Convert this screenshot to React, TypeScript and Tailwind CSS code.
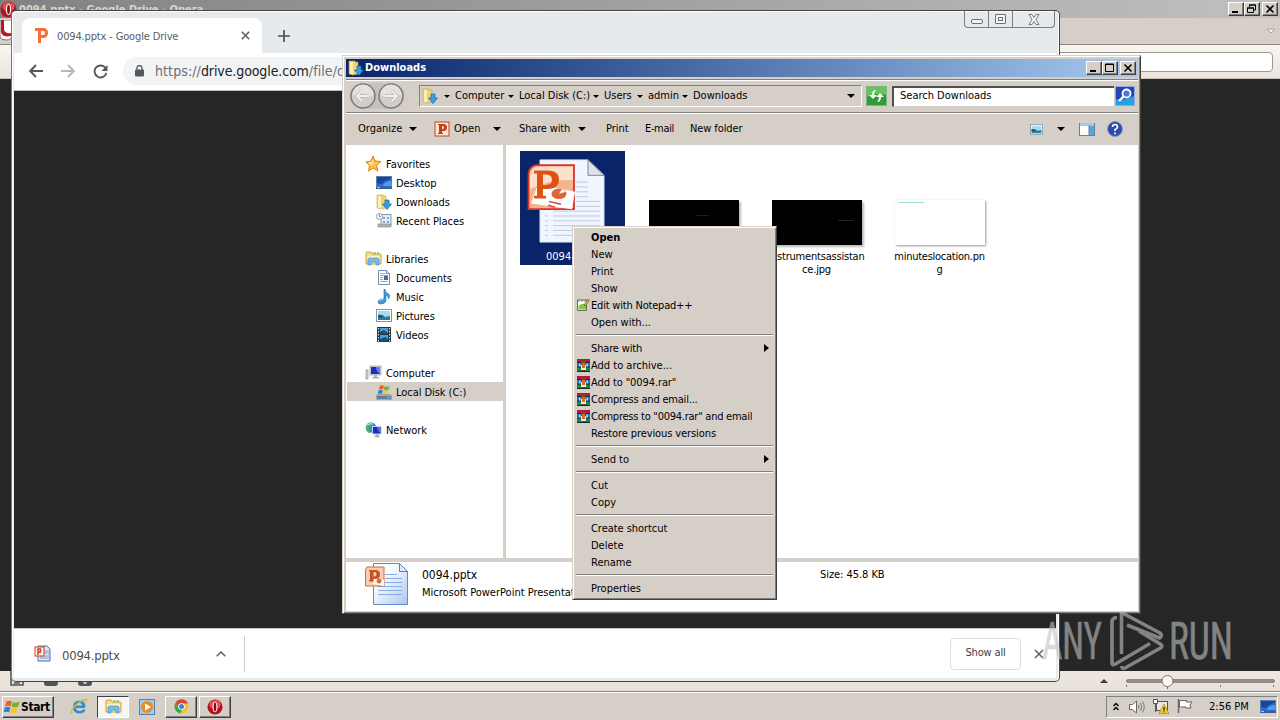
import React from 'react';

const Down = ({ className = '' }: { className?: string }) => (
  <svg width="8" height="4" viewBox="0 0 8 4" className={`shrink-0 ${className}`}>
    <path d="M0 0h8L4 4z" fill="#000" />
  </svg>
);

const PowerPointDoc = () => (
  <svg width="84" height="87" viewBox="0 0 84 90" preserveAspectRatio="none" className="shrink-0">
    <path d="M15 3h48l16 16v69H15z" fill="#f1f5fd" stroke="#dbe4f4" />
    <path d="M63 3v16h16z" fill="#dde3ea" stroke="#7d8694" />
    <path d="M51 26h12M51 31h12M51 36h12M51 41h12M51 46h24M51 51h24M28 56h47M28 61h47M28 66h47M28 71h47M28 76h47M28 81h47M20 61h3M20 66h3M20 71h3M20 76h3M20 81h3" stroke="#bccae4" />
    <path d="M11 8.500h38V54H3.500V17q1-7 7.500-8.500z" fill="#f5b58c" stroke="#d9342b" strokeWidth="1.800" />
    <path d="M5 33Q28 22 48 24V10H12Q6 12 5 19z" fill="#fbe0cb" />
    <path d="M13 28l37 8-3 18-41-6z" fill="#fff" />
    <ellipse cx="34" cy="38" rx="7.500" ry="5.500" fill="#df6437" />
    <path d="M34 38l3-5 4 3z" fill="#fff" />
    <path d="M24 46l12 3M23 50l7 2" stroke="#d94c3d" strokeWidth="1.600" />
    <path d="M9 14h13q12 0 12 9.500T22 33h-4v7h3v3H9v-3h3V17H9zM18 18v11h3q6-.5 6-5.500t-6-5.500z" fill="#dc5217" fillRule="evenodd" />
  </svg>
);

const PowerPointDocSmall = () => (
  <svg width="44" height="45" viewBox="0 0 44 45" className="shrink-0">
    <defs>
      <linearGradient id="page" x1="0" y1="0" x2="1" y2="1">
        <stop offset=".3" stopColor="#fbfdff" />
        <stop offset="1" stopColor="#a9c8f2" />
      </linearGradient>
    </defs>
    <path d="M8.500 1.500h26l8 8v33h-34z" fill="url(#page)" stroke="#6389c7" />
    <path d="M34.500 1.500v8h8z" fill="#e2edfb" stroke="#5c7fb8" />
    <path d="M20 12.500h12M20 16.500h17M20 20.500h17M13 24.500h24M13 28.500h24M13 32.500h24" stroke="#8caee0" />
    <path d="M2 5h17v19H.500V8z" fill="#f8cdb2" stroke="#d86a45" />
    <path d="M9 16l10 2v6l-11-2z" fill="#fff" />
    <circle cx="14" cy="19" r="2.500" fill="#e0693d" />
    <path d="M4 8h6q5 0 5 4.500T10 17H8.500v2.500H4V18h1V9.500H4zM8.500 10v4.500H10q1.500-.2 1.500-2.200T10 10z" fill="#c9501f" fillRule="evenodd" />
  </svg>
);

const PptSmall = () => (
  <svg width="16" height="16" viewBox="0 0 16 16" className="shrink-0">
    <rect x="1" y="1" width="14" height="14" fill="#fbe3d5" stroke="#c8421f" />
    <path d="M4 3h5q4 0 4 3.500T9 10H8v2h1v1H4v-1h1V4H4zM8 5v3h1q1-.3 1-1.500T9 5z" fill="#c63c13" fillRule="evenodd" />
  </svg>
);

const PptFile = () => (
  <svg width="17" height="17" viewBox="0 0 17 17" className="shrink-0">
    <path d="M4 1h9l3 3v12H4z" fill="#d9e6fa" stroke="#4a6fb4" />
    <path d="M10 6h5M10 8h5M6 11h9M6 13h9" stroke="#7f9fd5" />
    <rect x="1" y="2" width="9" height="9" fill="#fff0e8" stroke="#c8421f" />
    <path d="M4 10V4h2.500v3H4" fill="none" stroke="#c8421f" strokeWidth="1.500" />
  </svg>
);

const FolderDown = () => (
  <svg width="16" height="16" viewBox="0 0 16 16" className="shrink-0">
    <path d="M1 1h6v1h3v12l-5 1-4-1z" fill="#f1d370" stroke="#c9a340" strokeWidth=".6" />
    <path d="M2 2h3v12.500l-3-.8z" fill="#fbeeb0" />
    <path d="M9 6h4v4h2.500L11 15.500 6.500 10H9z" fill="#3c9ee0" stroke="#1666a8" strokeWidth=".7" />
  </svg>
);

const Star = () => (
  <svg width="17" height="17" viewBox="0 0 17 17" className="shrink-0">
    <path d="M8 1l2 5 6 .6-4.500 4 1.500 5.400L8.200 13 3.500 16l1-5.500L.8 7l5-.8z" fill="#ffc247" stroke="#de7f14" />
    <path d="M8 3l-1.300 4-4 .6 3 2.600L8 9z" fill="#ffe599" />
  </svg>
);

const Desktop = () => (
  <svg width="16" height="13" viewBox="0 0 16 13" className="shrink-0">
    <rect x=".5" y=".5" width="15" height="11" fill="#2f6bc4" stroke="#5b7fb4" />
    <path d="M1 1h14v2Q8 4 6 8L1 7z" fill="#1a4699" />
    <path d="M7 9q3-4 8-4v5H7z" fill="#4f9de6" />
    <path d="M0 11h16v2H0z" fill="#345e9c" />
    <path d="M1 11h3v1H1z" fill="#8fd1f5" />
  </svg>
);

const Recent = () => (
  <svg width="16" height="16" viewBox="0 0 16 16" className="shrink-0">
    <path d="M5 1.500h10V12H5z" fill="#e7eef5" stroke="#8498ad" />
    <path d="M7 4h2v2H7zM11 4h2v2h-2zM7 8h2v2H7zM11 8h2v2h-2z" fill="#7ea6cc" />
    <path d="M2 11h13v3H2z" fill="#a7b2bd" stroke="#7e8994" strokeWidth=".6" />
    <circle cx="3.500" cy="3.500" r="3" fill="#fff" stroke="#8c98a6" />
    <path d="M3.500 1.500v2H5" stroke="#556" fill="none" strokeWidth=".7" />
  </svg>
);

const Libraries = () => (
  <svg width="17" height="15" viewBox="0 0 17 15" className="shrink-0">
    <path d="M1 2q0-1 1-1h4l1 2h8q1 0 1 1v9H1z" fill="#f6df85" stroke="#c9a63f" />
    <path d="M2 5h13v3H2z" fill="#fff1b6" />
    <path d="M3 13V9q0-2 2-2h7q2 0 2 2v5h-3v-3H6v3H3z" fill="#74bdec" stroke="#3e8cc4" strokeWidth=".6" />
    <path d="M8 2h3M12 2h2" stroke="#55aa55" />
  </svg>
);

const Doc = () => (
  <svg width="16" height="16" viewBox="0 0 16 16" className="shrink-0">
    <path d="M2.500 .5h8l3 3v11h-11z" fill="#fff" stroke="#6f8fae" />
    <path d="M10.500.5v3h3" fill="#d9e5f1" stroke="#6f8fae" />
    <path d="M4 3.500h5M4 5.500h8M4 7.500h3M4 9.500h3M4 11.500h8" stroke="#8fb0d6" />
    <path d="M8 6h4v4H8z" fill="#44699f" />
  </svg>
);

const Music = () => (
  <svg width="16" height="16" viewBox="0 0 16 16" className="shrink-0">
    <path d="M9 0q0 3 3 4.500T12.500 10q.3-3-2.500-4v6q-1 3-5 3Q1.500 15 2 12.500 3 9.500 8 10V0z" fill="#3d9bd8" stroke="#1d70ad" strokeWidth=".6" />
    <path d="M4 11.500q1-1 3-.8" stroke="#b5e2fa" fill="none" />
  </svg>
);

const Picture = ({ className = '' }: { className?: string }) => (
  <svg width="16" height="13" viewBox="0 0 16 13" className={`shrink-0 ${className}`}>
    <rect x=".5" y=".5" width="15" height="12" fill="#fff" stroke="#8294a5" />
    <path d="M2 2h12v9H2z" fill="#a5dcf2" />
    <path d="M2 6q5-1 7 2l5-1v4H2z" fill="#2c7ba3" />
    <path d="M2 6q3-1 6 2l-6 1z" fill="#235a6f" />
  </svg>
);

const Video = () => (
  <svg width="15" height="15" viewBox="0 0 15 15" className="shrink-0">
    <path d="M0 0h14v15H0z" fill="#273845" />
    <path d="M3 1h8v6H3zM3 8h8v6H3z" fill="#4aa3d8" />
    <path d="M3 5l4-2 4 3v1H3zM3 12l5-2 3 2v2H3z" fill="#194f7b" />
    <path d="M1.500 1v14M12.500 1v14" stroke="#e5edf3" strokeDasharray="1.500 1.500" />
  </svg>
);

const Computer = () => (
  <svg width="17" height="15" viewBox="0 0 17 15" className="shrink-0">
    <path d="M1 5h2v9H1z" fill="#d5d7d8" stroke="#8d9194" strokeWidth=".7" />
    <rect x="5" y="1" width="11" height="9" fill="#d6dce6" stroke="#9299a8" strokeWidth=".7" />
    <path d="M6 2h9v7H6z" fill="#1f2fbb" />
    <path d="M11 2h4v7q-4-2-4-7z" fill="#5c7cf0" />
    <path d="M9 10h3v2h2v1.500H7.500V12H9z" fill="#aab1ba" />
  </svg>
);

const WinFlag = ({ size }: { size: number }) => (
  <svg width={size} height={size} viewBox="0 0 16 16" className="shrink-0">
    <path d="M2.500 2.500Q5 .8 8 2.500L6.700 7.300Q4 6 1 7.500z" fill="#ee6125" />
    <path d="M8.900 3Q12 4.500 15.500 2.500L14 7.500q-3 1.600-6.400.2z" fill="#71b42c" />
    <path d="M.8 8.500Q4 7 6.400 8.400L5 13.400Q2.500 12-.5 13.600z" fill="#2b80d9" />
    <path d="M7.300 8.800Q10.500 10 13.700 8.600l-1.400 5Q9 15 5.900 13.700z" fill="#fdc52b" />
  </svg>
);

const Disk = () => (
  <span className="flex w-4 flex-col items-center">
    <WinFlag size={12} />
    <svg width="16" height="6" viewBox="0 0 16 6" className="-mt-[2px]">
      <path d="M0 1l2-1h12l2 1v5H0z" fill="#a3a9ad" />
      <path d="M1 2h14v3H1z" fill="#5f7f9a" />
      <path d="M11 3h3v1h-3z" fill="#56e35c" />
    </svg>
  </span>
);

const Network = () => (
  <svg width="17" height="16" viewBox="0 0 17 16" className="shrink-0">
    <circle cx="6" cy="5.500" r="5.200" fill="#2d8fd8" />
    <path d="M2 3q3-3 5-2L6 4 3 6l2 3-1 2Q0 8 1 5z" fill="#50b848" />
    <path d="M2 3q3-2 6-1" stroke="#c9f0fa" fill="none" />
    <rect x="7" y="4" width="9.500" height="8.500" fill="#c9d2e2" />
    <path d="M8 5h7.500v6.500H8z" fill="#1c2cba" />
    <path d="M12 5h3.500v6Q12 9 12 5z" fill="#5070ea" />
    <path d="M10.500 12.500h3V14h-3zM9.500 14h5v1.200h-5z" fill="#9aa5b5" />
  </svg>
);

const WinRar = () => (
  <svg width="13" height="13" viewBox="0 0 13 13" className="mb-px shrink-0">
    <path d="M0 0h13v4H0z" fill="#b3163f" />
    <path d="M0 4h13v4H0z" fill="#2c6fc0" />
    <path d="M0 8h13v5H0z" fill="#148a3d" />
    <path d="M0 3.500h13M0 8h13M0 12.500h13" stroke="#182a28" />
    <path d="M4 1h5v11H4z" fill="#7f4023" />
    <path d="M4 6h5v5H4z" fill="#efe8e0" />
    <path d="M5 4h3v5H5z" fill="#d86a31" />
    <path d="M2 4.500h1.500v3H2zM9.500 4.500H11v3H9.500z" fill="#b9d3ea" />
  </svg>
);

const Notepad = () => (
  <svg width="14" height="14" viewBox="0 0 14 14" className="mb-px shrink-0">
    <path d="M1.500 2h9v10.500h-9z" fill="#fff" stroke="#5f6f5b" />
    <path d="M2.500 8Q5 5 10 6v5.500H2.500z" fill="#83c83d" />
    <path d="M3 1v3M6 1v3M9 1v3" stroke="#88928a" />
    <path d="M8 7l4-6 1.500 1-4 6z" fill="#eab43c" stroke="#63491a" strokeWidth=".6" />
  </svg>
);

const OperaO = ({ size }: { size: number }) => (
  <svg width={size} height={size} viewBox="0 0 18 18" className="shrink-0">
    <circle cx="9" cy="9" r="8.500" fill="#b70f1c" />
    <ellipse cx="9" cy="6" rx="6.500" ry="5" fill="#e3504f" />
    <ellipse cx="9" cy="9" rx="2.800" ry="6" fill="#fff" />
    <ellipse cx="9" cy="9" rx="1.500" ry="5" fill="#8d0c15" />
  </svg>
);

const raised = 'border border-t-white border-l-white border-r-[#404040] border-b-[#404040] bg-[#d6cfc8] shadow-[inset_-1px_-1px_0_#808080]';

const CaptionButtons = ({ restore = false }: { restore?: boolean }) => (
  <div className="flex">
    <span className={`h-[14px] w-4 ${raised}`}>
      <svg width="14" height="12" viewBox="0 0 14 12"><path d="M3 8h6v2H3z" /></svg>
    </span>
    <span className={`mr-[2px] h-[14px] w-4 ${raised}`}>
      <svg width="14" height="12" viewBox="0 0 14 12">
        {restore ? (
          <path d="M4.500 4V2h6v5h-2M2.500 5h6v4.500h-6zM4 2h7M2 5h7" fill="none" stroke="#000" />
        ) : (
          <path d="M2.500 2h8v7.500h-8zM2 2.500h9" fill="none" stroke="#000" />
        )}
      </svg>
    </span>
    <span className={`h-[14px] w-4 ${raised}`}>
      <svg width="14" height="12" viewBox="0 0 14 12"><path d="M3.500 2.500l7 7M10.500 2.500l-7 7" stroke="#000" strokeWidth="1.600" /></svg>
    </span>
  </div>
);

const OperaWindow = () => (
  <div className="absolute inset-x-0 top-0 flex h-[692px] flex-col bg-[#262626]">
    <div className="flex h-[18px] shrink-0 items-start justify-between bg-linear-to-r from-[#828282] to-[#c0c0c0] pt-px pr-[2px]">
      <div className="flex items-center">
        <OperaO size={17} />
        <span className="ml-[2px] text-[11px] leading-[16px] font-bold text-[#d8d4ce]">0094.pptx - Google Drive - Opera</span>
      </div>
      <div className="pt-px"><CaptionButtons restore /></div>
    </div>
    <div className="flex h-[27px] shrink-0 items-center justify-between border-b border-[#8d8780] bg-[#d6cfc8] pr-1">
      <svg width="12" height="22" viewBox="0 0 12 22"><path d="M0 0h12v15q0 5-6 5-5 0-6-3z" fill="#fff" stroke="#777" /><path d="M1 0h3v10q2 4 7 3v3Q1 18 1 11z" fill="#bd1620" /></svg>
      <svg width="10" height="6" viewBox="0 0 10 6"><path d="M1 1h8L5 5z" fill="#f4f1ed" stroke="#a8a29b" /></svg>
    </div>
    <div className="flex h-[34px] shrink-0 items-center justify-end border-b border-[#c9c3bb] bg-linear-to-b from-[#f8f5f1] to-[#e9e4dc] pr-[7px]">
      <div className="h-[20px] w-[250px] rounded border border-[#9d9892] bg-white" />
    </div>
    <div className="grow" />
    <div className="flex h-[21px] shrink-0 items-center justify-end gap-[18px] border-b border-[#8b857d] bg-linear-to-b from-[#ede7e0] to-[#e8e2da] pr-[5px]">
      <div className="mr-auto flex h-full items-start pl-[10px]">
        <svg width="90" height="15" viewBox="0 0 90 15"><path d="M1 0v14h12V7M4 12h6" fill="none" stroke="#555" strokeWidth="1.600" /><rect x="34" y="6" width="14" height="9" rx="3" fill="#555" /><rect x="68" y="6" width="14" height="9" rx="3" fill="#555" /><circle cx="75" cy="11" r="2" fill="#ccc" /></svg>
      </div>
      <svg width="8" height="4" viewBox="0 0 8 4"><path d="M0 4h8L4 0z" fill="#3c3c3c" /></svg>
      <svg width="149" height="18" viewBox="0 0 149 18">
        <rect x=".5" y="7.500" width="148" height="3" rx="1.500" fill="#958d86" stroke="#77716a" strokeWidth=".7" />
        <path d="M.5 13v2M41.500 14v3M94.500 13v2M147.500 13v2" stroke="#77716a" />
        <circle cx="41.500" cy="9" r="5.500" fill="#fbfaf8" stroke="#77716a" />
      </svg>
    </div>
  </div>
);

const ChromeWindow = () => (
  <div className="absolute top-[10px] left-[11px] flex h-[672px] w-[1049px] flex-col rounded-[5px] border border-[#454545] border-l-[#777] bg-[#e7eaed] pr-[3px] pb-[3px] pl-[2px] text-[#3c4043] shadow-[inset_1px_1px_0_#fff,inset_-1px_0_0_#fff]">
    <div className="flex h-[42px] shrink-0 justify-between">
      <div className="flex items-end pl-2">
        <div className="flex h-[35px] w-[240px] items-center rounded-t-[8px] bg-white px-[12px]">
          <svg width="15" height="17" viewBox="0 0 15 17">
            <path d="M1 1h8q5 0 5 5t-5 5H7v5H4V4H1zM7 4v4h2q2 0 2-2T9 4z" fill="#f4703a" fillRule="evenodd" />
          </svg>
          <span className="ml-[8px] pt-[3px] text-[11px] tracking-[-0.150px] text-[#5a5d60]">0094.pptx - Google Drive</span>
          <svg width="9" height="9" viewBox="0 0 9 9" className="mr-0 ml-auto"><path d="M.8.8l7.400 7.400M8.200.8L.8 8.200" stroke="#5f6368" strokeWidth="1.600" /></svg>
        </div>
        <svg width="12" height="12" viewBox="0 0 12 12" className="mb-[11px] ml-4"><path d="M6 0v12M0 6h12" stroke="#4c4f52" strokeWidth="1.700" /></svg>
      </div>
      <div className="mr-px flex h-[17px] rounded-b-[4px] border border-t-0 border-[#7b7f84]">
        <span className="flex w-[24px] items-center justify-center border-r border-[#7b7f84] pt-[4px]">
          <span className="h-[5px] w-[12px] rounded-[2px] border border-[#6a6e73] bg-[#f4f6f7]" />
        </span>
        <span className="flex w-[24px] items-center justify-center border-r border-[#7b7f84]">
          <span className="flex h-[10px] w-[11px] items-center justify-center rounded-[1px] border border-[#6a6e73] bg-[#f4f6f7]">
            <span className="h-[4px] w-[5px] border border-[#6a6e73]" />
          </span>
        </span>
        <span className="flex w-[41px] items-center justify-center">
          <svg width="12" height="11" viewBox="0 0 12 11"><path d="M1 .5h3l2 3 2-3h3L8 5.500l3 5H8l-2-3-2 3H1l3-5z" fill="#f7f8f9" stroke="#6a6e73" strokeWidth=".9" /></svg>
        </span>
      </div>
    </div>
    <div className="flex h-[38px] shrink-0 items-center border-b border-[#b9bbbd] bg-white pb-px pl-[15px]">
      <svg width="14" height="14" viewBox="0 0 14 14" className="mr-[18px]"><path d="M14 7H1.500M7 1L1.200 7 7 13" fill="none" stroke="#55585c" strokeWidth="1.900" /></svg>
      <svg width="14" height="14" viewBox="0 0 14 14" className="mr-[18px]"><path d="M0 7h12.500M7 1l5.800 6L7 13" fill="none" stroke="#b6b8ba" strokeWidth="1.900" /></svg>
      <svg width="15" height="15" viewBox="0 0 15 15" className="mr-[15px]"><path d="M12.500 4A6 6 0 1 0 13.400 9" fill="none" stroke="#55585c" strokeWidth="1.900" /><path d="M14.500 1v6h-6z" fill="#55585c" /></svg>
      <div className="flex h-[28px] w-[880px] items-center rounded-full bg-[#f1f3f4] pl-[12px]">
        <svg width="9" height="12" viewBox="0 0 9 12"><rect y="4.500" width="9" height="7" rx="1" fill="#55585c" /><path d="M2 5V3a2.500 2.500 0 0 1 5 0v2" fill="none" stroke="#55585c" strokeWidth="1.300" /></svg>
        <span className="ml-[11px] text-[14px] tracking-[0.100px] text-[#6b6f73]">
          https://<span className="tracking-[-0.100px] text-[#202124]">drive.google.com</span>/file/d
        </span>
      </div>
    </div>
    <div className="grow bg-[#262626]" />
    <div className="flex h-[50px] shrink-0 items-center border-t border-[#c6c6c6] bg-white pr-[12px] pl-5">
      <PptFile />
      <span className="ml-[11px] pt-[4px] text-[13px] tracking-[-0.250px] text-[#4a4d50]">0094.pptx</span>
      <svg width="10" height="6" viewBox="0 0 10 6" className="ml-[96px]"><path d="M.7 5.300L5 1l4.300 4.300" fill="none" stroke="#5f6368" strokeWidth="1.500" /></svg>
      <span className="ml-[18px] h-[36px] w-px bg-[#c9cbcd]" />
      <div className="ml-auto flex h-[32px] w-[71px] items-center justify-center rounded-[4px] border border-[#dadce0] text-[11px] tracking-[-0.150px]">Show all</div>
      <svg width="10" height="10" viewBox="0 0 10 10" className="ml-[13px]"><path d="M1 1l8 8M9 1L1 9" stroke="#5f6368" strokeWidth="1.600" /></svg>
    </div>
  </div>
);

const navItems: { label: string; icon: React.ReactNode; root?: boolean; selected?: boolean; gap?: boolean }[] = [
  { label: 'Favorites', icon: <Star />, root: true },
  { label: 'Desktop', icon: <Desktop /> },
  { label: 'Downloads', icon: <FolderDown /> },
  { label: 'Recent Places', icon: <Recent /> },
  { label: 'Libraries', icon: <Libraries />, root: true, gap: true },
  { label: 'Documents', icon: <Doc /> },
  { label: 'Music', icon: <Music /> },
  { label: 'Pictures', icon: <Picture /> },
  { label: 'Videos', icon: <Video /> },
  { label: 'Computer', icon: <Computer />, root: true, gap: true },
  { label: 'Local Disk (C:)', icon: <Disk />, selected: true },
  { label: 'Network', icon: <Network />, root: true, gap: true },
];

const crumbs = [
  { label: 'Computer', width: 'w-[64px]' },
  { label: 'Local Disk (C:)', width: 'w-[85px]' },
  { label: 'Users', width: 'w-[44px]' },
  { label: 'admin', width: 'w-[45px]' },
  { label: 'Downloads', width: 'w-[64px]' },
];

const RoundArrow = ({ flip = false }: { flip?: boolean }) => (
  <svg width="26" height="26" viewBox="0 0 26 26" className={flip ? '-scale-x-100' : ''}>
    <circle cx="13" cy="13" r="12" fill="#d2cfcb" stroke="#7d7b79" strokeWidth="1.500" />
    <path d="M2.500 12a10.500 10.500 0 0 1 21 0q-10 4-21 0z" fill="#e4e2df" />
    <path d="M19 13H8M12 8l-5 5 5 5" fill="none" stroke="#bdbab7" strokeWidth="3.600" />
    <path d="M19 13H8M12 8l-5 5 5 5" fill="none" stroke="#efeeec" strokeWidth="2.200" />
  </svg>
);

const ExplorerWindow = () => (
  <div className="absolute top-[55px] left-[342px] flex h-[559px] w-[799px] flex-col border border-t-[#d6cfc8] border-r-[#404040] border-b-[#404040] border-l-[#d6cfc8] bg-[#d6cfc8] p-[3px] pr-[2px] pb-[2px] text-[11px] text-black shadow-[inset_1px_1px_0_#fff,inset_-1px_-1px_0_#808080]">
    <div className="flex h-[18px] shrink-0 items-center bg-linear-to-r from-[#0a246a] to-[#a6caf0] pr-[2px] pl-[2px]">
      <FolderDown />
      <span className="mr-auto ml-px pt-px font-bold text-white">Downloads</span>
      <CaptionButtons />
    </div>
    <div className="mt-[2px] flex h-[34px] shrink-0 items-center border-t border-b border-t-[#808080] border-b-[#808080] pl-[4px] shadow-[inset_0_1px_0_#fff,0_1px_0_#fff]">
      <div className="flex gap-[2px] rounded-full bg-[#c5c2be]">
        <RoundArrow />
        <RoundArrow flip />
      </div>
      <div className="ml-[15px] flex h-[22px] w-[443px] items-center border border-t-[#808080] border-r-white border-b-white border-l-[#808080] pl-[2px]">
        <FolderDown />
        {crumbs.map((c) => (
          <span key={c.label} className={`flex shrink-0 items-center whitespace-nowrap ${c.width}`}>
            <svg width="6" height="3" viewBox="0 0 6 3" className="mr-[5px] ml-[6px] shrink-0"><path d="M0 0h6L3 3z" /></svg>
            {c.label}
          </span>
        ))}
        <Down className="mr-[6px] ml-auto" />
      </div>
      <svg width="21" height="20" viewBox="0 0 21 20" className="ml-[4px]">
        <rect x=".5" y=".5" width="20" height="19" fill="#2d9e37" stroke="#7eb57d" />
        <path d="M1 1h19v8Q10 6 1 11z" fill="#65c35b" />
        <path d="M10 4q-4 0-4 5H3l4 4 4-4H8q0-3 2-5z" fill="#fff" />
        <path d="M11 16q4 0 4-5h3l-4-4-4 4h3q0 3-2 5z" fill="#fff" />
      </svg>
      <div className="ml-[5px] flex h-[21px] w-[222px] items-center border-t-2 border-b border-l-2 border-t-[#505050] border-b-[#d6cfc8] border-l-[#505050] bg-white pl-[6px]">Search Downloads</div>
      <svg width="20" height="20" viewBox="0 0 20 20" className="ml-px">
        <rect x=".5" y=".5" width="19" height="19" fill="#2445ba" stroke="#99a8d9" />
        <path d="M1 13q9 2 18-3v9H1z" fill="#21a3e5" />
        <circle cx="11.500" cy="7.500" r="4" fill="#4d75dd" stroke="#fff" strokeWidth="1.800" />
        <path d="M8.500 10.500L4 15" stroke="#fff" strokeWidth="2.400" />
      </svg>
    </div>
    <div className="flex h-[32px] shrink-0 items-center pl-[12px]">
      <span className="w-[51px] pt-px">Organize</span>
      <Down />
      <span className="ml-[17px]"><PptSmall /></span>
      <span className="ml-[4px] w-[39px] pt-px">Open</span>
      <Down />
      <span className="ml-[18px] w-[59px] pt-px tracking-[-0.150px]">Share with</span>
      <Down />
      <span className="ml-[20px] w-[39px] pt-px">Print</span>
      <span className="w-[45px] pt-px tracking-[-0.350px]">E-mail</span>
      <span className="pt-px tracking-[-0.100px]">New folder</span>
      <Picture className="ml-auto h-[11px] w-[13px]" />
      <Down className="ml-[14px]" />
      <svg width="16" height="15" viewBox="0 0 16 15" className="ml-[14px]"><rect x=".5" y="1.500" width="15" height="12" fill="#fff" stroke="#6381a8" /><path d="M1 1h14v3H1z" fill="#a8cbe4" /><path d="M10 4h5v9h-5z" fill="#58a6d8" /><path d="M10 3v10" stroke="#6381a8" /></svg>
      <svg width="16" height="16" viewBox="0 0 16 16" className="mr-[15px] ml-[12px]"><circle cx="8" cy="8" r="7.500" fill="#2b4cae" stroke="#8a9bc9" /><path d="M5.500 6q0-2.500 2.500-2.500T10.500 6Q10.500 7.500 8 8.500V10M8 11.500v1.800" fill="none" stroke="#fff" strokeWidth="1.700" /></svg>
    </div>
    <div className="flex grow bg-white">
      <div className="w-[157px] shrink-0 pt-[9px] pl-px">
        {navItems.map((n) => (
          <div key={n.label} className={`flex h-[19px] items-center ${n.root ? 'pl-[18px]' : 'pl-[29px]'} ${n.gap ? 'mt-[19px]' : ''} ${n.selected ? 'bg-[#d6cfc8]' : ''}`}>
            <span className={`mr-[4px] flex justify-center ${n.root ? 'w-[17px]' : 'w-4'}`}>{n.icon}</span>
            <span className="pt-[3px] tracking-[-0.050px]">{n.label}</span>
          </div>
        ))}
      </div>
      <div className="w-[3px] shrink-0 bg-[#d6cfc8]" />
      <div className="flex grow items-start pt-[6px] pl-[14px]">
        <div className="flex h-[114px] w-[105px] flex-col justify-between bg-[#0a246a] pt-[6px] pb-[2px] pl-[5px] text-white">
          <PowerPointDoc />
          <span className="pl-[21px] leading-[13px]">0094.pptx</span>
        </div>
        <div className="mt-[49px] ml-[24px] h-[45px] w-[90px] bg-black shadow-[2px_2px_2px_#bbb]">
          <div className="mt-[15px] ml-[47px] h-px w-[13px] bg-[#1d1d1d]" />
        </div>
        <div className="mt-[49px] ml-[20px] flex w-[115px] flex-col items-center text-center leading-[13px]">
          <div className="flex h-[45px] w-[90px] items-center justify-end bg-black pr-2 pb-[5px] shadow-[2px_2px_2px_#bbb]"><span className="h-px w-[16px] bg-[#252525]" /></div>
          <span className="mt-[5px] tracking-[-0.200px]">instrumentsassistan<br />ce.jpg</span>
        </div>
        <div className="mt-[49px] ml-[8px] flex w-[115px] flex-col items-center text-center leading-[13px]">
          <div className="h-[45px] w-[90px] bg-white pt-[2px] pl-[4px] shadow-[1px_1px_2px_#999]"><div className="h-px w-[25px] bg-[#9be0c2]" /></div>
          <span className="mt-[5px] tracking-[-0.250px]">minuteslocation.pn<br />g</span>
        </div>
      </div>
    </div>
    <div className="flex h-[53px] shrink-0 items-start border-t-4 border-[#d6cfc8] bg-white pl-[19px]">
      <PowerPointDocSmall />
      <div className="ml-[13px] w-[398px] pt-[4px] leading-[18px]">
        <div className="text-[12px]">0094.pptx</div>
        <div>Microsoft PowerPoint Presentation</div>
      </div>
      <span className="pt-[4px] leading-[18px] tracking-[-0.050px]">Size: 45.8 KB</span>
    </div>
  </div>
);

type MenuEntry = { label: string; icon?: React.ReactNode; sub?: boolean; text?: string } | null;

// null draws a separator
const menu: MenuEntry[] = [
  { label: 'Open', text: 'font-bold' },
  { label: 'New' },
  { label: 'Print' },
  { label: 'Show' },
  { label: 'Edit with Notepad++', icon: <Notepad />, text: 'tracking-[-0.200px]' },
  { label: 'Open with...' },
  null,
  { label: 'Share with', sub: true, text: 'tracking-[-0.150px]' },
  { label: 'Add to archive...', icon: <WinRar /> },
  { label: 'Add to "0094.rar"', icon: <WinRar />, text: 'tracking-[-0.100px]' },
  { label: 'Compress and email...', icon: <WinRar />, text: 'tracking-[-0.200px]' },
  { label: 'Compress to "0094.rar" and email', icon: <WinRar />, text: 'tracking-[-0.250px]' },
  { label: 'Restore previous versions', text: 'tracking-[-0.100px]' },
  null,
  { label: 'Send to', sub: true },
  null,
  { label: 'Cut' },
  { label: 'Copy' },
  null,
  { label: 'Create shortcut', text: 'tracking-[-0.050px]' },
  { label: 'Delete' },
  { label: 'Rename' },
  null,
  { label: 'Properties' },
];

const ContextMenu = () => (
  <div className="absolute top-[226px] left-[572px] w-[205px] border border-t-[#d6cfc8] border-r-[#404040] border-b-[#404040] border-l-[#d6cfc8] bg-[#d6cfc8] p-[2px] text-[11px] text-black shadow-[inset_1px_1px_0_#fff,inset_-1px_-1px_0_#808080]">
    {menu.map((m, i) =>
      m ? (
        <div key={i} className="flex h-[17px] items-center whitespace-nowrap">
          <span className="flex w-4 justify-center">{m.icon}</span>
          <span className={`pt-[2px] ${m.text ?? ''}`}>{m.label}</span>
          {m.sub && <svg width="5" height="8" viewBox="0 0 5 8" className="mr-[5px] mb-[2px] ml-auto"><path d="M0 0v8l5-4z" /></svg>}
        </div>
      ) : (
        <div key={i} className="h-[9px] px-px pt-[3px]">
          <div className="h-[2px] w-full border-t border-b border-t-[#808080] border-b-white" />
        </div>
      )
    )}
  </div>
);

const Watermark = () => (
  <svg width="210" height="64" viewBox="0 0 210 64" className="absolute top-[608px] left-[1036px] opacity-60">
    <g fill="#c2c2c2" stroke="#c2c2c2" strokeWidth=".6" fontFamily="Roboto, sans-serif" fontSize="51">
      <text x="6" y="51" textLength="60" lengthAdjust="spacingAndGlyphs">ANY</text>
      <text x="133" y="51" textLength="64" lengthAdjust="spacingAndGlyphs">RUN</text>
    </g>
    <g fill="none" stroke="#c2c2c2" strokeWidth="3.600" strokeLinejoin="round">
      <path d="M81 9.500q-5 .5-5 4V55q0 2.500 3 1.200l35-20.700" />
      <path d="M85.500 46V4.500L124 25q3 2.500-.5 5L91 17" />
      <path d="M103 23l22 13.500q2 2-.5 3.500L89 60q-3 1.500-3.500-2" />
    </g>
  </svg>
);

const Taskbar = () => (
  <div className="absolute inset-x-0 bottom-0 flex h-[28px] items-center border-t border-white bg-[#d6cfc8] pl-[2px] text-black">
    <div className={`flex h-[22px] w-[52px] items-center gap-px pl-px text-[12px] font-bold tracking-[-0.400px] ${raised}`}>
      <WinFlag size={16} />
      Start
    </div>
    <svg width="18" height="17" viewBox="0 0 18 17" className="ml-[16px]">
      <path d="M15 10H6q.5 3 3.500 3 2 0 3-1.500h3Q14.500 15.500 9.500 15.500 3 15.500 3 9t6.500-6.500q5.500 0 6 6zM6 7.500h6.200Q12 5 9.200 5T6 7.500z" fill="#2793d9" fillRule="evenodd" />
      <path d="M1 16Q-1 12 6 6T17 1q1 2-2 5 1.500-3 0-3.500Q12 2 6 8T3 15z" fill="#e3b535" />
    </svg>
    <div className="ml-[9px] flex h-[22px] w-[32px] items-center justify-center border border-t-[#404040] border-r-white border-b-white border-l-[#404040] bg-[#f8f6f4]"><Libraries /></div>
    <svg width="16" height="16" viewBox="0 0 16 16" className="ml-[10px]"><rect x=".5" y=".5" width="15" height="15" fill="#9fcbee" stroke="#4b86bd" /><circle cx="8" cy="8" r="6" fill="#ef8d1c" /><path d="M6 4.500v7L12 8z" fill="#fff" /></svg>
    <div className={`ml-[10px] flex h-[22px] w-[32px] items-center justify-center ${raised}`}>
      <svg width="15" height="15" viewBox="0 0 15 15"><circle cx="7.500" cy="7.500" r="7" fill="#efc427" /><path d="M1.400 4A7 7 0 0 1 14 4.500H7.500L5 9z" fill="#dc4538" /><path d="M1.400 4L5 9.500l3 1L6.500 14.500A7 7 0 0 1 1.400 4z" fill="#3ba757" /><circle cx="7.500" cy="7.500" r="3.300" fill="#fff" /><circle cx="7.500" cy="7.500" r="2.500" fill="#3f7fe0" /></svg>
    </div>
    <div className={`ml-[2px] flex h-[22px] w-[32px] items-center justify-center ${raised}`}><OperaO size={16} /></div>
    <div className="mr-[2px] ml-auto flex h-[22px] w-[172px] items-center border border-t-[#808080] border-r-white border-b-white border-l-[#808080] pl-[6px] text-[11px]">
      <svg width="6" height="9" viewBox="0 0 6 9"><path d="M.5 4L3 1.500 5.500 4M.5 8L3 5.500 5.500 8" fill="none" stroke="#000" strokeWidth="1.300" /></svg>
      <svg width="16" height="14" viewBox="0 0 16 14" className="ml-[10px]"><path d="M.5 4.500h3L7.500 1v12l-4-3.500h-3z" fill="#fff" stroke="#666" /><path d="M9.500 5q1 2 0 4M11.500 3q2.500 4 0 8M13.500 1.500q3.500 5.500 0 11" fill="none" stroke="#777" /></svg>
      <svg width="16" height="15" viewBox="0 0 16 15" className="ml-[8px]"><rect x="3.500" y="2.500" width="11" height="9" fill="#e8e8e8" stroke="#555" /><path d="M.5.500h4v4h-4zM2.500 5v8" fill="#fff" stroke="#555" /><path d="M11 5l5 9.500H6z" fill="#f6cc25" stroke="#9c7a10" strokeWidth=".6" /><path d="M11 8v3.500M11 12.300v1" stroke="#000" /></svg>
      <svg width="16" height="15" viewBox="0 0 16 15" className="ml-[8px]"><path d="M1.500 0v14" stroke="#666" strokeWidth="1.500" /><path d="M2.500 1.500h7v1.500h5.500l-2 3 1 3H9V8H2.500z" fill="#fff" stroke="#666" /></svg>
      <span className="ml-[16px] pt-[2px] whitespace-nowrap">2:56 PM</span>
      <span className="ml-auto pr-[1px]"><Desktop /></span>
    </div>
  </div>
);

export default function App() {
  return (
    <div className="relative h-[720px] w-[1280px] overflow-hidden bg-[#262626] font-['DejaVu_Sans_Condensed','DejaVu_Sans',sans-serif] [font-stretch:75%]">
      <OperaWindow />
      <ChromeWindow />
      <ExplorerWindow />
      <ContextMenu />
      <Watermark />
      <Taskbar />
    </div>
  );
}
